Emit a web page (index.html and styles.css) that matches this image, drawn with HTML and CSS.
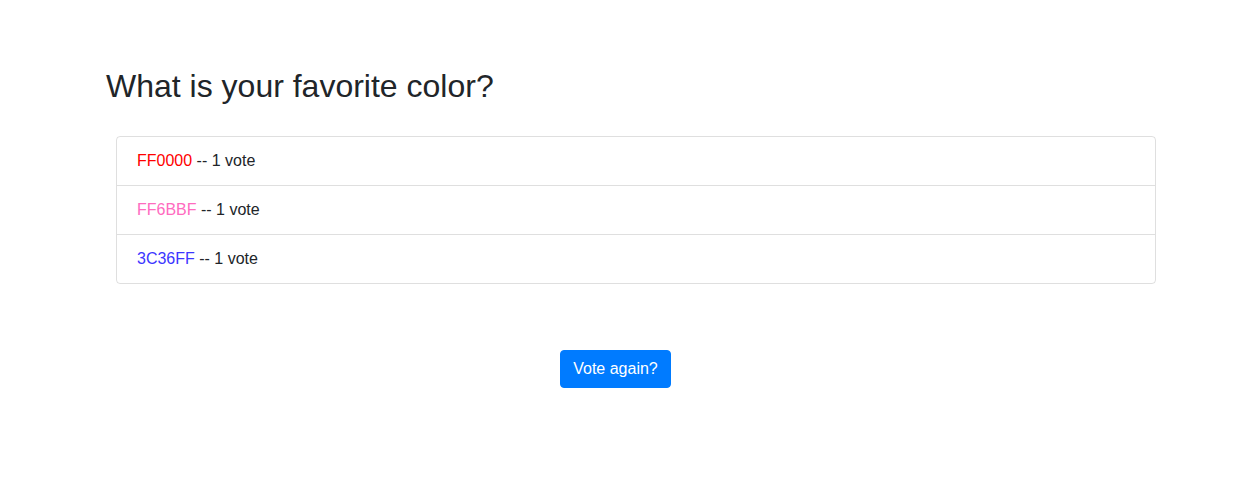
FILE: index.html
```html
<!DOCTYPE html>
<html lang="en">
<head>
<meta charset="utf-8">
<title>Poll results</title>
<link rel="stylesheet" href="styles.css">
</head>
<body>
<main class="page">
  <h2 class="title">What is your favorite color?</h2>
  <ul class="votes">
    <li class="vote"><span class="c-red">FF0000</span> -- 1 vote</li>
    <li class="vote"><span class="c-pink">FF6BBF</span> -- 1 vote</li>
    <li class="vote"><span class="c-blue">3C36FF</span> -- 1 vote</li>
  </ul>
  <div class="actions">
    <button class="btn" type="button">Vote again?</button>
  </div>
</main>
</body>
</html>
```
FILE: styles.css
```css
* { box-sizing: border-box; }
html, body { margin: 0; padding: 0; background: #fff; }
body {
  font-family: "Liberation Sans", Arial, sans-serif;
  font-size: 16px;
  line-height: 1.5;
  color: #212529;
}
.page {
  padding: 67px 0 0 106px;
}
.title {
  margin: 0 0 31px;
  font-size: 32px;
  font-weight: 500;
  line-height: 1.2;
}
.votes {
  list-style: none;
  margin: 0 0 0 10px;
  padding: 0;
  width: 1040px;
  border: 1px solid rgba(0,0,0,.125);
  border-radius: 4px;
}
.vote {
  padding: 12px 20px;
  line-height: 24px;
}
.vote + .vote { border-top: 1px solid rgba(0,0,0,.125); }
.c-red { color: #FF0000; }
.c-pink { color: #FF6BBF; }
.c-blue { color: #3C36FF; }
.actions {
  width: 1019px;
  margin-top: 66px;
  display: flex;
  justify-content: center;
}
.btn {
  font-family: inherit;
  font-size: 16px;
  line-height: 24px;
  padding: 6px 12px;
  color: #fff;
  background: #007bff;
  border: 1px solid #007bff;
  border-radius: 4px;
  cursor: pointer;
}
```
